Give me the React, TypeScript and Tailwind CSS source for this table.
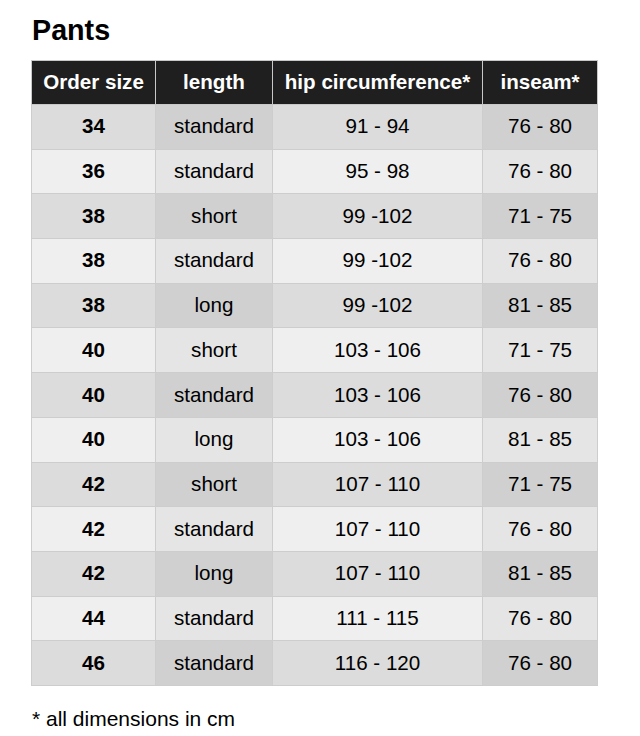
const rows: [string, string, string, string][] = [
  ["34", "standard", "91 - 94", "76 - 80"],
  ["36", "standard", "95 - 98", "76 - 80"],
  ["38", "short", "99 -102", "71 - 75"],
  ["38", "standard", "99 -102", "76 - 80"],
  ["38", "long", "99 -102", "81 - 85"],
  ["40", "short", "103 - 106", "71 - 75"],
  ["40", "standard", "103 - 106", "76 - 80"],
  ["40", "long", "103 - 106", "81 - 85"],
  ["42", "short", "107 - 110", "71 - 75"],
  ["42", "standard", "107 - 110", "76 - 80"],
  ["42", "long", "107 - 110", "81 - 85"],
  ["44", "standard", "111 - 115", "76 - 80"],
  ["46", "standard", "116 - 120", "76 - 80"],
];

export default function App() {
  return (
    <div className="min-h-[736px] bg-white pl-[31px] pt-[14px] text-black [font-family:'Liberation_Sans',Arial,sans-serif]">
      <h1 className="text-[28.7px] font-bold leading-[32px] pl-px">Pants</h1>
      <table className="mt-[14px] w-[567px] border-collapse text-center text-[20.6px]">
        <thead>
          <tr className="h-[44px] bg-[#1f1f1f] text-white">
            <th className="w-[124px] border border-[#c8c8c8] font-bold">Order size</th>
            <th className="w-[117px] border border-[#c8c8c8] font-bold">length</th>
            <th className="w-[210px] border border-[#c8c8c8] font-bold">hip circumference*</th>
            <th className="border border-[#c8c8c8] font-bold">inseam*</th>
          </tr>
        </thead>
        <tbody>
          {rows.map((r, i) => {
            const odd = i % 2 === 0;
            const light = odd ? "bg-[#dcdcdc]" : "bg-[#efefef]";
            const dark = odd ? "bg-[#d0d0d0]" : "bg-[#e5e5e5]";
            return (
              <tr key={i} className="h-[44.7px]">
                <td className={`border border-[#cdcdcd] font-bold ${light}`}>{r[0]}</td>
                <td className={`border border-[#cdcdcd] ${dark}`}>{r[1]}</td>
                <td className={`border border-[#cdcdcd] ${light}`}>{r[2]}</td>
                <td className={`border border-[#cdcdcd] ${dark}`}>{r[3]}</td>
              </tr>
            );
          })}
        </tbody>
      </table>
      <p className="mt-[21px] pl-px text-[21px] leading-[24px]">* all dimensions in cm</p>
    </div>
  );
}
